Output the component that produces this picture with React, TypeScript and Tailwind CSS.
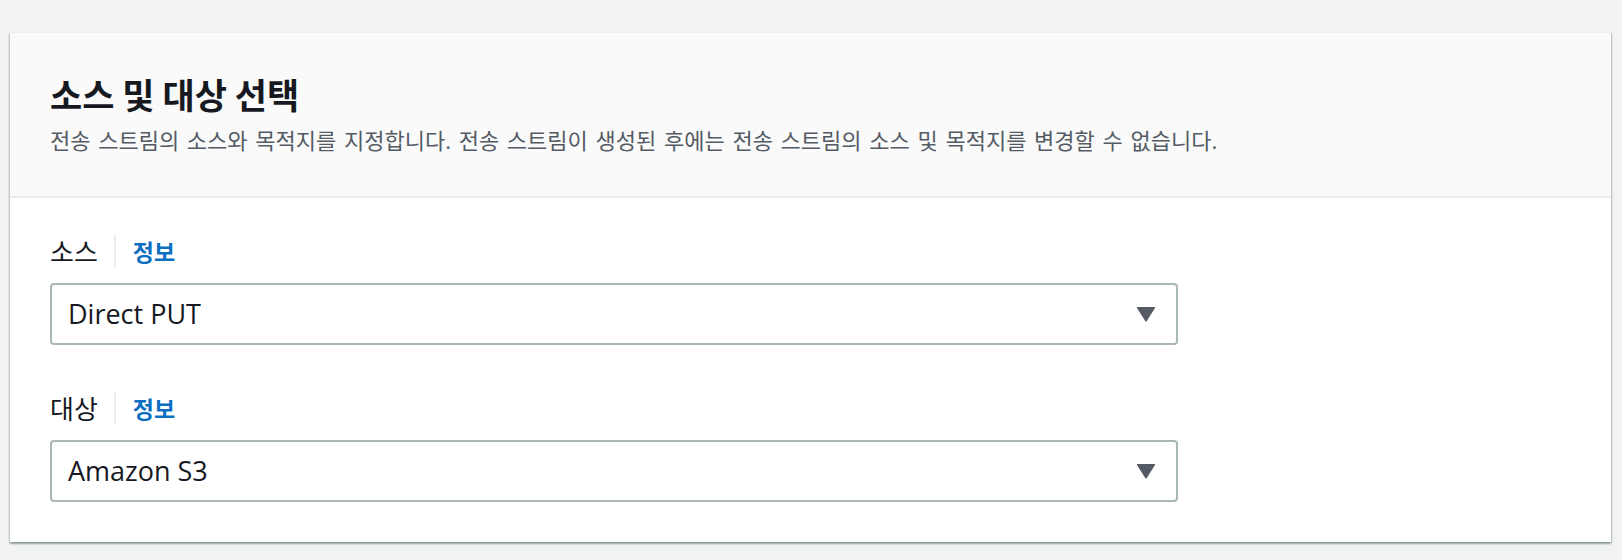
import { useState } from "react";

const kr = { fontFamily: '"Noto Sans CJK KR", "Noto Sans", sans-serif' };
const latin = { fontFamily: '"Open Sans", "Noto Sans CJK KR", sans-serif' };

const Caret = () => (
  <svg width="20" height="16" viewBox="0 0 20 16" className="shrink-0">
    <path d="M1.5 1 L18.5 1 Q19.5 1 19 2 L10.8 15 Q10 16 9.2 15 L1 2 Q0.5 1 1.5 1 Z" fill="#545b64" />
  </svg>
);

type FieldProps = {
  label: string;
  value: string;
  options: string[];
  onChange: (v: string) => void;
  className?: string;
};

const SelectField = ({ label, value, options, onChange, className }: FieldProps) => {
  return (
    <div className={className}>
      <div className="flex items-center h-[32px]">
        <span style={kr} className="text-[26px] leading-[32px] text-[#16191f]">
          {label}
        </span>
        <span className="ml-[16px] w-[2px] h-[32px] bg-[#eaeded]"></span>
        <a style={kr} href="#" className="ml-[17px] text-[23px] leading-[32px] font-bold text-[#0a6fc2]">
          정보
        </a>
      </div>
      <label className="relative mt-[16px] flex items-center w-[1128px] h-[62px] border-2 border-[#aab7b8] rounded-[4px] bg-white pl-[16px] pr-[20px]">
        <span style={latin} className="flex-1 text-[27px] leading-[40px] text-[#16191f]">
          {value}
        </span>
        <Caret />
        <select
          value={value}
          onChange={(e) => onChange(e.target.value)}
          className="absolute inset-0 opacity-0 cursor-pointer"
        >
          {options.map((o) => (
            <option key={o} value={o}>
              {o}
            </option>
          ))}
        </select>
      </label>
    </div>
  );
};

const App = () => {
  const [source, setSource] = useState("Direct PUT");
  const [dest, setDest] = useState("Amazon S3");

  return (
    <div className="min-h-[560px] bg-[#f2f3f3] pt-[32px] pl-[10px] pr-[11px] pb-[18px]">
      <div className="bg-white border-t border-[#eaeded] shadow-[0_2px_2px_0_rgba(0,28,36,0.3),1px_1px_2px_0_rgba(0,28,36,0.15),-1px_1px_2px_0_rgba(0,28,36,0.15)]">
        <div className="bg-[#fafafa] border-b-2 border-[#eaeded] pl-[40px] pr-[40px] pt-[39px] pb-[41px]">
          <h2 style={kr} className="text-[35px] leading-[44px] font-bold text-[#16191f]">
            소스 및 대상 선택
          </h2>
          <p style={latin} className="mt-[9px] text-[22px] leading-[30px] [word-spacing:2px] text-[#545b64]">
            전송 스트림의 소스와 목적지를 지정합니다. 전송 스트림이 생성된 후에는 전송 스트림의 소스 및 목적지를 변경할 수 없습니다.
          </p>
        </div>
        <div className="px-[40px] pt-[37px] pb-[40px]">
          <SelectField
            label="소스"
            value={source}
            options={["Direct PUT", "Kinesis Data Streams", "Amazon MSK"]}
            onChange={setSource}
          />
          <SelectField
            className="mt-[47px]"
            label="대상"
            value={dest}
            options={["Amazon S3", "Amazon Redshift", "Amazon OpenSearch Service", "Splunk"]}
            onChange={setDest}
          />
        </div>
      </div>
    </div>
  );
};

export default App;
